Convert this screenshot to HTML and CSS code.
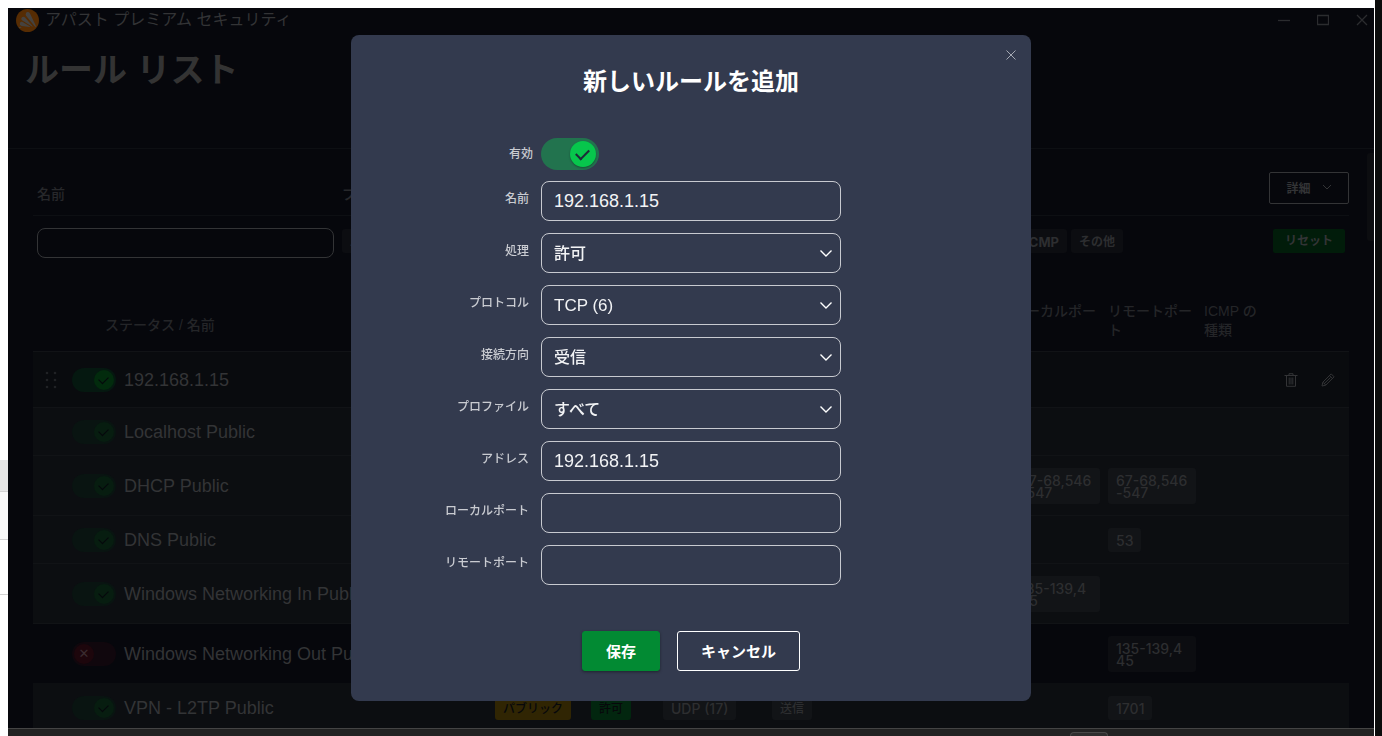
FILE: index.html
```html
<!DOCTYPE html>
<html lang="ja">
  <head>
    <title>ルール リスト</title>
    <meta charset="utf-8">
    <meta name="viewport" content="width=device-width, initial-scale=1.0">
    <link rel="stylesheet" href="styles.css">
  </head>
  <body>
    <div class="desktop">
      <div class="left-edge">
        <div class="edge-blank"></div>
        <div class="edge-selected"></div>
        <div class="edge-item"></div>
        <div class="edge-row"></div>
      </div>

      <div class="screen">
        <main class="window">
          <header class="window-header">
            <div class="titlebar">
              <svg class="logo" viewBox="0 0 24 24" aria-hidden="true">
                <circle cx="12" cy="12" r="12" fill="#562c03"/>
                <path d="M10.300 4.600c.6-1.700 3.200-1.900 4.200-.2l6.300 13.300c.3.900-.5 1.300-1.100.6L10.700 7.200c-.6-.8-.8-1.600-.4-2.600z" fill="#45423f"/>
                <path d="M5.800 9.100c.8-1.300 2.300-1.400 3.400-.4l8 9c.4.600 0 1-.6.600L6.600 12.100c-1-.8-1.400-1.900-.8-3z" fill="#45423f"/>
                <path d="M4.100 14.700c.5-1.200 1.500-1.500 2.800-1.100l7.400 4.500c.5.400.3.800-.3.700l-8.100-1c-1.500-.3-2.300-1.700-1.800-3.100z" fill="#45423f"/>
                <path d="M2.600 19.100c1-.8 2.200-.8 3.400-.4-.8 1.100-2 1.500-3.400.4z" fill="#45423f"/>
              </svg>
              <span class="app-name">アパスト プレミアム セキュリティ</span>
              <div class="window-buttons">
                <button type="button" aria-label="最小化"><svg viewBox="0 0 12 12"><path d="M0 6.500h12"/></svg></button>
                <button type="button" aria-label="最大化"><svg viewBox="0 0 12 12"><path d="M.5 1.500h11v9H.5z"/></svg></button>
                <button type="button" aria-label="閉じる"><svg viewBox="0 0 12 12"><path d="M1 1l10 10M11 1L1 11"/></svg></button>
              </div>
            </div>
            <h1>ルール リスト</h1>
          </header>

          <div class="content">
            <section class="filters">
              <div class="filter-head">
                <label class="filter-name" for="filter-name">名前</label>
                <span class="filter-profile">プロファイル</span>
                <button type="button" class="btn-details">詳細
                  <svg viewBox="0 0 10 6"><path d="M1 1l4 4 4-4"/></svg>
                </button>
              </div>
              <div class="filter-row">
                <input type="text" id="filter-name" class="filter-input">
                <div class="chip-group">
                  <span class="chip chip-ja">パブリック</span>
                </div>
                <div class="chip-group chip-group-right">
                  <span class="chip">ICMP</span>
                  <span class="chip chip-ja">その他</span>
                </div>
                <button type="button" class="btn-reset">リセット</button>
              </div>
            </section>

            <table class="rules">
              <colgroup>
                <col>
                <col class="col-profile">
                <col class="col-action">
                <col class="col-protocol">
                <col class="col-direction">
                <col class="col-port">
                <col class="col-port">
                <col class="col-port">
                <col class="col-icmp">
                <col class="col-tools">
              </colgroup>
              <thead>
                <tr>
                  <th class="th-status">ステータス / 名前</th>
                  <th></th>
                  <th></th>
                  <th></th>
                  <th></th>
                  <th></th>
                  <th>ローカルポート</th>
                  <th>リモートポート</th>
                  <th>ICMP の<br>種類</th>
                  <th></th>
                </tr>
              </thead>
              <tbody>
                <tr class="short active">
                  <td>
                    <div class="rule">
                      <svg class="handle" viewBox="0 0 12 18">
                        <circle cx="2" cy="2" r="1.300"/><circle cx="10" cy="2" r="1.300"/>
                        <circle cx="2" cy="9" r="1.300"/><circle cx="10" cy="9" r="1.300"/>
                        <circle cx="2" cy="16" r="1.300"/><circle cx="10" cy="16" r="1.300"/>
                      </svg>
                      <input type="checkbox" id="rule1" class="toggle" checked><label for="rule1">192.168.1.15</label>
                    </div>
                  </td>
                  <td colspan="8"></td>
                  <td>
                    <div class="tools">
                      <button type="button" aria-label="削除">
                        <svg viewBox="0 0 14 14"><path d="M.5 2.500h13M5 2V.7h4V2M2.500 3v10.300h9V3M5.200 4.500v7M7 4.500v7M8.800 4.500v7"/></svg>
                      </button>
                      <button type="button" aria-label="編集">
                        <svg viewBox="0 0 14 14"><path d="M1 13l.8-3.800L10.200.9l2.900 2.900-8.400 8.400zM8.500 2.600l2.900 2.900M3 10.800l6.500-6.300M2 9.300l2.700 2.700"/></svg>
                      </button>
                    </div>
                  </td>
                </tr>
                <tr>
                  <td><div class="rule indent"><input type="checkbox" id="rule2" class="toggle" checked><label for="rule2">Localhost Public</label></div></td>
                  <td colspan="9"></td>
                </tr>
                <tr class="tall">
                  <td><div class="rule indent"><input type="checkbox" id="rule3" class="toggle" checked><label for="rule3">DHCP Public</label></div></td>
                  <td colspan="5"></td>
                  <td><span class="chip">67-68,546-547</span></td>
                  <td><span class="chip">67-68,546-547</span></td>
                  <td colspan="2"></td>
                </tr>
                <tr>
                  <td><div class="rule indent"><input type="checkbox" id="rule4" class="toggle" checked><label for="rule4">DNS Public</label></div></td>
                  <td colspan="6"></td>
                  <td><span class="chip">53</span></td>
                  <td colspan="2"></td>
                </tr>
                <tr class="tall">
                  <td><div class="rule indent"><input type="checkbox" id="rule5" class="toggle" checked><label for="rule5">Windows Networking In Public</label></div></td>
                  <td colspan="5"></td>
                  <td><span class="chip">135-139,445</span></td>
                  <td colspan="3"></td>
                </tr>
                <tr class="tall off">
                  <td><div class="rule indent"><input type="checkbox" id="rule6" class="toggle"><label for="rule6">Windows Networking Out Public</label></div></td>
                  <td colspan="6"></td>
                  <td><span class="chip">135-139,445</span></td>
                  <td colspan="2"></td>
                </tr>
                <tr class="last">
                  <td><div class="rule indent"><input type="checkbox" id="rule7" class="toggle" checked><label for="rule7">VPN - L2TP Public</label></div></td>
                  <td><span class="chip chip-ja chip-yellow">パブリック</span></td>
                  <td><span class="chip chip-ja chip-green">許可</span></td>
                  <td><span class="chip">UDP (17)</span></td>
                  <td><span class="chip chip-ja">送信</span></td>
                  <td></td>
                  <td></td>
                  <td><span class="chip">1701</span></td>
                  <td colspan="2"></td>
                </tr>
              </tbody>
            </table>
            <div class="scrollbar"></div>
          </div>
        </main>
        <div class="taskbar"><div class="task"></div></div>
      </div>
      <div class="right-edge"></div>
    </div>

    <div class="overlay">
      <form class="modal" role="dialog" aria-labelledby="modal-title">
        <button type="button" class="modal-close" aria-label="閉じる"><svg viewBox="0 0 10 10"><path d="M.5.5l9 9M9.500.5l-9 9"/></svg></button>
        <h2 id="modal-title">新しいルールを追加</h2>

        <div class="toggle-row">
          <label for="enabled">有効</label>
          <input type="checkbox" id="enabled" class="toggle toggle-large" checked>
        </div>

        <div class="fields">
          <label for="name">名前</label>
          <input type="text" id="name" value="192.168.1.15">

          <label for="action">処理</label>
          <div class="select">
            <select id="action"><option>許可</option><option>ブロック</option></select>
            <svg viewBox="0 0 12 7"><path d="M.5.5L6 6 11.500.5"/></svg>
          </div>

          <label for="protocol">プロトコル</label>
          <div class="select select-latin">
            <select id="protocol"><option>TCP (6)</option><option>UDP (17)</option></select>
            <svg viewBox="0 0 12 7"><path d="M.5.5L6 6 11.500.5"/></svg>
          </div>

          <label for="direction">接続方向</label>
          <div class="select">
            <select id="direction"><option>受信</option><option>送信</option></select>
            <svg viewBox="0 0 12 7"><path d="M.5.5L6 6 11.500.5"/></svg>
          </div>

          <label for="profile">プロファイル</label>
          <div class="select">
            <select id="profile"><option>すべて</option><option>パブリック</option></select>
            <svg viewBox="0 0 12 7"><path d="M.5.5L6 6 11.500.5"/></svg>
          </div>

          <label for="address">アドレス</label>
          <input type="text" id="address" value="192.168.1.15">

          <label for="local-port">ローカルポート</label>
          <input type="text" id="local-port">

          <label for="remote-port">リモートポート</label>
          <input type="text" id="remote-port">
        </div>

        <div class="modal-buttons">
          <button type="submit" class="btn-save">保存</button>
          <button type="button" class="btn-cancel">キャンセル</button>
        </div>
      </form>
    </div>
  </body>
</html>
```
FILE: styles.css
```css
* {
  box-sizing: border-box;
}

body {
  margin: 0;
  background: #fff;
  color: #333436;
  font-family: "Liberation Sans", "Noto Sans CJK JP", sans-serif;
  font-size: 14px;
}

button,
input,
select {
  margin: 0;
  padding: 0;
  border: 0;
  background: none;
  color: inherit;
  font: inherit;
}

svg {
  display: block;
  fill: none;
  stroke: currentColor;
}

.desktop {
  display: flex;
  height: 100vh;
  overflow: hidden;
}

/* slices of the windows behind */
.left-edge {
  flex: none;
  width: 8px;
}

.edge-blank {
  height: 460px;
}

.edge-selected {
  height: 32px;
  background: #e6e6e6;
  border-bottom: 1px solid #d2d2d2;
}

.edge-item {
  height: 48px;
  background: #f8f8f8;
  border-bottom: 1px solid #d2d2d2;
}

.edge-row {
  height: 55px;
  border-bottom: 1px solid #d2d2d2;
}

.right-edge {
  flex: none;
  width: 8px;
  background: #0b0c0c;
  border-left: 1px solid #fff;
}

.screen {
  flex: 1;
  min-width: 0;
  display: flex;
  flex-direction: column;
  padding-top: 8px;
}

.window {
  flex: 1;
  min-height: 0;
  overflow: hidden;
  background: #06070c;
}

.taskbar {
  flex: none;
  height: 8px;
  background: #222;
  border-top: 1px solid #444;
  padding: 3px 266px 0 0;
}

.task {
  width: 38px;
  height: 4px;
  margin-left: auto;
  border: 1px solid #484848;
  border-bottom: 0;
  border-radius: 4px 4px 0 0;
  background: #2e2e2e;
}

/* header */
.window-header {
  height: 141px;
  border-bottom: 1px solid #0d0f13;
}

.titlebar {
  display: flex;
  align-items: center;
  height: 24px;
  padding: 0 6px 0 8px;
}

.logo {
  width: 23px;
  height: 23px;
  margin-right: 6px;
  stroke: none;
}

.app-name {
  font-size: 16px;
  line-height: 22px;
  color: #333436;
}

.window-buttons {
  display: flex;
  gap: 27px;
  margin-left: auto;
  color: #2b2c2f;
}

.window-buttons svg {
  width: 12px;
  height: 12px;
  stroke-width: 1.3;
}

h1 {
  margin: 14px 0 0 17px;
  font-size: 34px;
  line-height: 48px;
  font-weight: bold;
  color: #333;
}

/* filters */
.content {
  position: relative;
  padding: 23px 25px 0;
}

.filter-head {
  display: flex;
  align-items: flex-end;
  height: 44px;
  padding: 0 0 11px 4px;
  border-bottom: 1px solid #0d0f13;
  color: #27282b;
  font-weight: 500;
}

.filter-name {
  width: 305px;
}

.filter-name,
.filter-profile {
  line-height: 20px;
}

.btn-details {
  display: flex;
  align-items: center;
  justify-content: center;
  gap: 11px;
  width: 80px;
  height: 32px;
  margin-left: auto;
  padding-bottom: 2px;
  border: 1px solid #333436;
  border-radius: 2px;
  color: #333436;
  font-size: 12px;
  font-weight: bold;
}

.btn-details svg {
  width: 10px;
  height: 6px;
}

.filter-row {
  display: flex;
  align-items: flex-start;
  padding: 12px 4px 0;
}

.filter-input {
  width: 297px;
  height: 30px;
  margin-right: 8px;
  border: 1px solid #333436;
  border-radius: 8px;
}

.chip-group {
  display: flex;
  gap: 4px;
  padding-top: 1px;
}

.chip-group-right {
  margin: 0 150px 0 auto;
}

.btn-reset {
  width: 72px;
  height: 24px;
  margin-top: 1px;
  border-radius: 2px;
  background: #011c0a;
  font-size: 12px;
  line-height: 20px;
  font-weight: bold;
}

.chip {
  display: inline-block;
  min-height: 24px;
  padding: 7px 8px 5px;
  border-radius: 3px;
  background: #121417;
  color: #2d2e30;
  font-family: Inter, "Noto Sans CJK JP", sans-serif;
  font-size: 14px;
  line-height: 12px;
  font-weight: 500;
  word-break: break-all;
  vertical-align: middle;
}

.filter-row .chip {
  background: #0c0d11;
  font-size: 13px;
  font-weight: bold;
}

.chip-ja,
.filter-row .chip-ja {
  font-size: 12px;
}

.chip-yellow {
  background: #302503;
  color: #07080b;
}

.chip-green {
  background: #02260f;
  color: #07080b;
}

/* rule table */
.rules {
  width: 100%;
  margin-top: 44px;
  border-spacing: 0;
  table-layout: fixed;
}

.col-profile,
.col-port {
  width: 96px;
}

.col-action {
  width: 72px;
}

.col-protocol {
  width: 109px;
}

.col-direction {
  width: 144px;
}

.col-icmp {
  width: 67px;
}

.col-tools {
  width: 78px;
}

th {
  padding: 0 8px 11px 0;
  font-weight: 500;
  line-height: 19px;
  text-align: left;
  vertical-align: bottom;
  color: #242528;
}

.rules .th-status {
  padding: 0 0 16px 72px;
}

td {
  height: 48px;
  padding: 0;
  background: #0c0e11;
  border-top: 1px solid #111316;
}

td .chip {
  max-width: 88px;
}

.short td {
  height: 56px;
}

.active td {
  background: #090b0e;
}

.tall td {
  height: 60px;
}

.off td {
  background: #06070c;
}

.off .chip {
  background: #0c0d11;
}

.last td {
  border-top-color: #0c0e11;
}

.rule {
  display: flex;
  align-items: center;
  padding-left: 12px;
  font-size: 18px;
  white-space: nowrap;
  overflow: hidden;
}

.indent {
  padding-left: 39px;
}

.rule label {
  margin-left: 8px;
  padding-top: 2px;
}

.handle {
  width: 12px;
  height: 18px;
  margin-right: 15px;
  fill: #202225;
  stroke: none;
}

.tools {
  display: flex;
  justify-content: flex-end;
  gap: 23px;
  padding-right: 14px;
}

.tools svg {
  width: 14px;
  height: 14px;
}

/* toggle switch */
.toggle {
  appearance: none;
  position: relative;
  flex: none;
  width: 44px;
  height: 24px;
  border-radius: 12px;
  background: #091411;
}

.toggle::before {
  content: "";
  position: absolute;
  top: 2px;
  right: 2px;
  width: 20px;
  height: 20px;
  border-radius: 50%;
  background: #071d10;
}

.toggle::after {
  content: "";
  position: absolute;
  top: 8px;
  right: 8px;
  width: 8px;
  height: 5px;
  border: solid #06070c;
  border-width: 0 0 1px 1px;
  transform: rotate(-45deg);
}

.active .toggle {
  background: #051810;
}

.active .toggle::before {
  background: #022b0d;
}

.off .toggle {
  background: #10070d;
}

.off .toggle::before {
  right: 22px;
  background: #1d060c;
}

.off .toggle::after {
  content: "✕";
  top: 2px;
  right: 22px;
  width: 20px;
  height: 20px;
  border: 0;
  transform: none;
  color: #3a2c30;
  font-family: "DejaVu Sans", sans-serif;
  font-size: 13px;
  line-height: 20px;
  text-align: center;
}

.scrollbar {
  position: absolute;
  top: 4px;
  right: 0;
  width: 7px;
  height: 88px;
  border-radius: 3px 0 0 3px;
  background: #0c0d10;
}

/* dialog */
.overlay {
  position: fixed;
  inset: 0;
  display: flex;
  align-items: center;
  justify-content: center;
}

.modal {
  position: relative;
  width: 680px;
  max-width: 100%;
  padding: 28px 0 30px;
  border-radius: 8px;
  background: #333a4e;
  color: #fff;
}

.modal-close {
  position: absolute;
  top: 15px;
  right: 15px;
  color: #a5a9b3;
}

.modal-close svg {
  width: 10px;
  height: 10px;
}

.modal h2 {
  margin: 0 0 37px;
  font-size: 24px;
  line-height: 38px;
  text-align: center;
}

.modal label {
  font-size: 12px;
  line-height: 16px;
  font-weight: 500;
  text-align: right;
  color: #c9cbd1;
}

.toggle-row {
  display: grid;
  grid-template-columns: 182px 58px;
  column-gap: 8px;
  align-items: center;
  margin-bottom: 11px;
}

.toggle-large {
  width: 58px;
  height: 32px;
  border-radius: 16px;
  background: #22734e;
}

.toggle-large::before {
  top: 3px;
  right: 3px;
  width: 26px;
  height: 26px;
  background: #07c64c;
  box-shadow: 0 1px 2px rgba(0, 0, 0, 0.3);
}

.toggle-large::after {
  top: 11px;
  right: 10px;
  width: 11px;
  height: 6px;
  border-color: #1c2a38;
  border-width: 0 0 2px 2px;
}

.fields {
  display: grid;
  grid-template-columns: 178px 300px;
  gap: 12px;
}

.fields label {
  padding-top: 10px;
}

.fields input,
.fields select {
  display: block;
  width: 100%;
  height: 40px;
  padding: 0 12px;
  border: 1px solid #c8cad0;
  border-radius: 8px;
  color: #f2f3f5;
  font-size: 18px;
}

.select {
  position: relative;
}

.fields select {
  appearance: none;
  font-size: 16px;
  font-weight: 500;
}

.fields .select-latin select {
  font-size: 17px;
}

.select svg {
  position: absolute;
  top: 17px;
  right: 9px;
  width: 12px;
  height: 7px;
  stroke-width: 1.4;
  pointer-events: none;
}

.modal-buttons {
  display: flex;
  justify-content: center;
  gap: 17px;
  margin-top: 46px;
  font-size: 15px;
  font-weight: bold;
}

.modal-buttons button {
  height: 40px;
  padding: 0 23px 2px;
  border: 1px solid #fff;
  border-radius: 3px;
}

.modal-buttons .btn-save {
  border-color: #028a33;
  background: #028a33;
  box-shadow: 0 1px 3px rgba(0, 0, 0, 0.4);
}
```
